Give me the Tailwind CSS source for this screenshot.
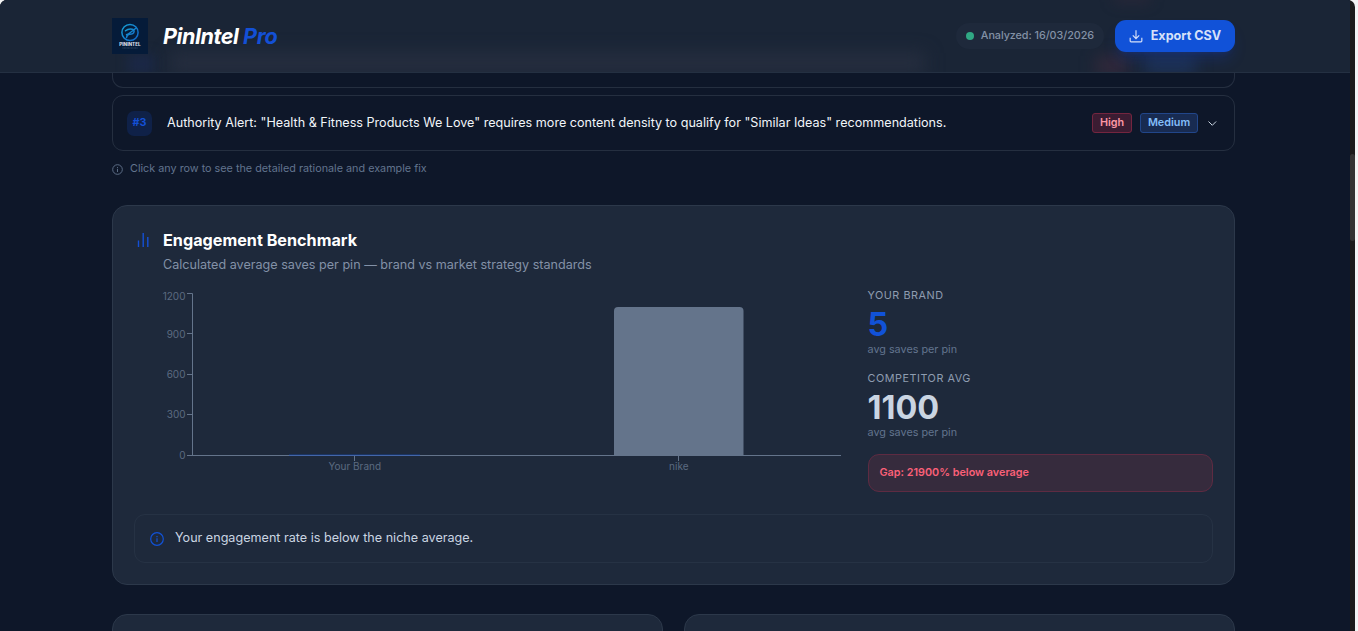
<!DOCTYPE html>
<html lang="en">
<head>
  <meta charset="UTF-8">
  <meta name="viewport" content="width=device-width, initial-scale=1.0">
  <title>PinIntel Pro</title>
  <script src="https://cdn.jsdelivr.net/npm/@tailwindcss/browser@4"></script>
</head>
<body class="h-screen overflow-hidden bg-[#f3f3f3] font-['Inter',sans-serif]">
  <div class="flex h-[631px] w-[1355px] overflow-hidden rounded-t-[7px] bg-[#1b1b1b]">
    <div class="flex h-full w-[1350px] shrink-0 flex-col bg-[#0e1729]">

      <!-- Header -->
      <header class="relative h-[73px] shrink-0 overflow-hidden border-b border-[#243042] bg-[#1a2536]">
        <div class="absolute top-[53px] left-[170px] h-[20px] w-[755px] bg-[#2b3243]/75 blur-[9px]"></div>
        <div class="absolute top-[54px] left-[128px] h-[20px] w-[26px] bg-[#1a2a52]/60 blur-[6px]"></div>
        <div class="absolute top-[56px] left-[1096px] h-[20px] w-[32px] bg-[#4a2b40]/50 blur-[8px]"></div>
        <div class="absolute top-[56px] left-[1144px] h-[20px] w-[52px] bg-[#1f3a6b]/60 blur-[8px]"></div>
        <div class="absolute -top-[9px] left-[1114px] h-[12px] w-[36px] bg-[#3f2a3c]/40 blur-[7px]"></div>
        <div class="relative flex h-[72px] items-center justify-between pr-[115px] pl-[112px]">
          <div class="flex items-center">
            <svg class="size-9" viewBox="0 0 36 36" fill="none">
              <defs>
                <linearGradient id="logo" x1="0" y1="0" x2="1" y2="1"><stop stop-color="#16a0d4"/><stop offset="1" stop-color="#1263c8"/></linearGradient>
              </defs>
              <rect width="36" height="36" fill="#051b39"/>
              <circle cx="18" cy="14.5" r="8.1" stroke="url(#logo)" stroke-width="1.5"/>
              <path d="M13.500 12.800q2-1.800 5-1.800 4 0 3.600 2.600-.6 2.700-4.600 2.700-2.300 0-3 3.200M14.500 16.800q2.500-1 9-6.300" stroke="url(#logo)" stroke-width="1.500" stroke-linecap="round"/>
              <text x="18" y="28" text-anchor="middle" textLength="21.500" lengthAdjust="spacingAndGlyphs" font-size="4.300" font-weight="800" fill="#d5dce6">PININTEL</text>
              <path d="M10.500 30h15" stroke="#536580" stroke-width=".6" stroke-dasharray="1 .4"/>
            </svg>
            <h1 class="mt-[2px] ml-[15px] text-[21.6px] leading-none font-bold tracking-[-0.46px] text-white italic">PinIntel <span class="text-[#1350d6]">Pro</span></h1>
          </div>
          <div class="flex items-center gap-[11px]">
            <div class="flex h-[26px] items-center gap-[7px] rounded-full bg-[#1e293b] px-[10px] text-[10.8px] font-medium tracking-[-0.06px] text-[#8391a6]">
              <span class="size-2 rounded-full bg-[#30a884]"></span>
              <span>Analyzed: 16/03/2026</span>
            </div>
            <button class="flex h-8 w-[120px] items-center justify-center gap-2 rounded-[11px] bg-[#1152d8] text-[12.6px] font-bold text-[#d6e1f9] shadow-lg shadow-blue-700/20">
              <svg class="size-[14px]" viewBox="0 0 24 24" fill="none" stroke="currentColor" stroke-width="2"><path d="M12 2v14M6.500 11l5.500 5.500L17.500 11M2 15v5.500q0 1.500 1.500 1.500h17q1.500 0 1.500-1.500V15"/></svg>
              Export CSV
            </button>
          </div>
        </div>
      </header>

      <main class="flex min-h-0 flex-1 flex-col overflow-hidden pr-[115px] pl-[112px]">
        <!-- Recommendations -->
        <div class="h-[15px] shrink-0 rounded-b-[11px] border border-t-0 border-[#252f40]"></div>
        <div class="mt-[7px] flex h-14 shrink-0 items-center rounded-[11px] border border-[#252f40] pr-[17px] pl-[14px]">
          <span class="flex size-[25px] items-center justify-center rounded-[7px] bg-[#0f2148] text-[10.8px] font-bold text-[#1350d6]">#3</span>
          <p class="ml-[15px] flex-1 text-[12.6px] text-slate-100">Authority Alert: "Health &amp; Fitness Products We Love" requires more content density to qualify for "Similar Ideas" recommendations.</p>
          <div class="flex items-center gap-2 text-[10.8px] font-semibold">
            <span class="flex h-5 w-10 items-center justify-center rounded-[3px] border border-[#74253f] bg-[#3b1c32] text-[#fc96a4]">High</span>
            <span class="flex h-5 w-[58px] items-center justify-center rounded-[3px] border border-[#21468a] bg-[#182b51] text-[#83bdf9]">Medium</span>
            <svg class="ml-[2px] size-[9px] text-slate-300" viewBox="0 0 9 9" fill="none" stroke="currentColor"><path d="m.5 2.500 3.800 3.800L8.100 2.500"/></svg>
          </div>
        </div>
        <p class="mt-[10px] flex h-4 shrink-0 items-center gap-[7px] text-[10.8px] text-slate-500">
          <svg class="mt-px size-[11px]" viewBox="0 0 24 24" fill="none" stroke="currentColor" stroke-width="2"><circle cx="12" cy="12" r="10.500"/><path d="M12 10.500v7M12 6.500v2"/></svg>
          Click any row to see the detailed rationale and example fix
        </p>

        <!-- Engagement -->
        <section class="mt-[28px] h-[380px] shrink-0 rounded-[15px] border border-[#2c384a] bg-[#1e293b] px-[21px] pt-[23px]">
          <div class="flex">
            <svg class="mt-[3px] ml-[2px] size-[16px] text-[#1350d6]" viewBox="0 0 16 16" fill="none" stroke="currentColor" stroke-width="1.400"><path d="M2.500 8.500V15M7.200 1v14M11.800 5v10"/></svg>
            <div class="ml-[11px]">
              <h2 class="text-[16.2px] leading-[22px] font-bold text-white">Engagement Benchmark</h2>
              <p class="mt-[5px] text-[12.6px] leading-[18px] text-[#8391a7]">Calculated average saves per pin — brand vs market strategy standards</p>
            </div>
          </div>

          <div class="mt-[12px] flex">
            <svg class="h-[200px] w-[733.500px]" viewBox="134 286 733.500 200" font-size="10" fill="#5c6b81">
              <path d="M614 455.500V311q0-4 4-4h121.500q4 0 4 4v144.500z" fill="#64748b"/>
              <g stroke="#64748b" fill="none">
                <path d="M187 293.500h5.500V455.500H187M187 333.500h5.500M187 374.500h5.500M187 414.500h5.500M192 455.500h649M354.500 456v5M678.500 456v5"/>
              </g>
              <path d="M289 454.500h131" stroke="#1152d8" stroke-opacity=".25"/>
              <path d="M289 455.500h131" stroke="#1152d8" stroke-opacity=".4"/>
              <g text-anchor="end">
                <text x="185.500" y="300">1200</text>
                <text x="185.500" y="338">900</text>
                <text x="185.500" y="378">600</text>
                <text x="185.500" y="418">300</text>
                <text x="185.500" y="459">0</text>
              </g>
              <g text-anchor="middle">
                <text x="354.800" y="470">Your Brand</text>
                <text x="678.800" y="470">nike</text>
              </g>
            </svg>
            <div class="flex-1">
              <p class="mt-[3px] text-[10.8px] leading-[14px] tracking-[0.54px] text-[#8f9db1] uppercase">Your brand</p>
              <p class="mt-[5px] text-[32.4px] leading-[33px] font-bold text-[#1152d8]">5</p>
              <p class="mt-[2px] text-[10.8px] leading-[14px] text-slate-500">avg saves per pin</p>
              <p class="mt-[15px] text-[10.8px] leading-[14px] tracking-[0.54px] text-[#8f9db1] uppercase">Competitor avg</p>
              <p class="mt-[5px] text-[32.4px] leading-[33px] font-bold text-slate-300">1100</p>
              <p class="mt-[2px] text-[10.8px] leading-[14px] text-slate-500">avg saves per pin</p>
              <div class="mt-[14px] flex h-[38px] items-center rounded-[11px] border border-[#5e2b42] bg-[#362b3d] px-[11px] text-[10.8px] font-semibold text-[#fb6078]">Gap: 21900% below average</div>
            </div>
          </div>

          <div class="mt-[22px] flex h-[49px] items-center rounded-[11px] border border-[#263244] px-[15px] text-[12.6px] text-slate-300">
            <svg class="mr-[11px] size-[14px] text-[#1152d8]" viewBox="0 0 14 14" fill="none" stroke="currentColor" stroke-width="1.200"><circle cx="7" cy="7" r="6.300"/><path d="M7 6.200V10M7 4v1.200"/></svg>
            Your engagement rate is below the niche average.
          </div>
        </section>

        <!-- Next row of cards -->
        <div class="mt-[29px] grid shrink-0 grid-cols-2 gap-[21px]">
          <div class="h-40 rounded-[15px] border border-[#2c384a] bg-[#1e293b]"></div>
          <div class="h-40 rounded-[15px] border border-[#2c384a] bg-[#1e293b]"></div>
        </div>
      </main>
    </div>

    <!-- Scrollbar -->
    <div class="w-[5px] pt-[154px]">
      <div class="h-[87px] rounded-sm bg-[#333333]"></div>
    </div>
  </div>
</body>
</html>
